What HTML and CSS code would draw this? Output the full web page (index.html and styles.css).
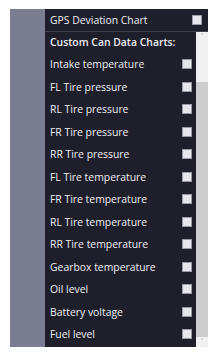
FILE: index.html
```html
<!DOCTYPE html>
<html>
  <head>
    <title>Chart Options</title>
    <link rel="stylesheet" href="styles.css">
  </head>
  <body>
    <div class="frame">
      <div class="side"></div>
      <div class="main">
        <div class="top-row">
          <span class="label">GPS Deviation Chart</span>
          <span class="check"></span>
        </div>
        <div class="list-wrap">
          <div class="list">
            <div class="heading">Custom Can Data Charts:</div>
            <div class="item"><span class="label">Intake temperature</span><span class="check"></span></div>
            <div class="item"><span class="label">FL Tire pressure</span><span class="check"></span></div>
            <div class="item"><span class="label">RL Tire pressure</span><span class="check"></span></div>
            <div class="item"><span class="label">FR Tire pressure</span><span class="check"></span></div>
            <div class="item"><span class="label">RR Tire pressure</span><span class="check"></span></div>
            <div class="item"><span class="label">FL Tire temperature</span><span class="check"></span></div>
            <div class="item"><span class="label">FR Tire temperature</span><span class="check"></span></div>
            <div class="item"><span class="label">RL Tire temperature</span><span class="check"></span></div>
            <div class="item"><span class="label">RR Tire temperature</span><span class="check"></span></div>
            <div class="item"><span class="label">Gearbox temperature</span><span class="check"></span></div>
            <div class="item"><span class="label">Oil level</span><span class="check"></span></div>
            <div class="item"><span class="label">Battery voltage</span><span class="check"></span></div>
            <div class="item"><span class="label">Fuel level</span><span class="check"></span></div>
          </div>
          <div class="scrollbar">
            <div class="arrow">&#x2C4;</div>
            <div class="track"></div>
            <div class="thumb"></div>
            <div class="arrow">&#x2C5;</div>
          </div>
        </div>
      </div>
    </div>
  </body>
</html>
```

FILE: styles.css
```css
:root {
  --panel-dark: #1f1f2c;
  --panel-side: #7b7d91;
  --text-light: #eeeef2;
  --check-fill: #e6e6ec;
  --check-border: #9a9aa8;
  --scroll-track: #f0f0f0;
  --scroll-thumb: #cdcdcd;
}

body {
  margin: 0;
  padding: 9px 12px 15px 10px;
  background-color: white;
  font-family: "Open Sans", "Noto Sans", sans-serif;
  font-size: 10.4px;
  color: var(--text-light);
}

.frame {
  display: flex;
  height: 338px;
}

.side {
  width: 35px;
  background-color: var(--panel-side);
}

.main {
  flex: 1;
  display: flex;
  flex-direction: column;
  background-color: var(--panel-dark);
  min-width: 0;
}

.top-row {
  display: flex;
  align-items: center;
  justify-content: space-between;
  height: 22px;
  padding: 0 6px 0 5px;
  border-bottom: 1px solid #40414f;
}

.list-wrap {
  flex: 1;
  display: flex;
  min-height: 0;
}

.list {
  flex: 1;
  overflow: hidden;
  padding-left: 5px;
}

.heading {
  font-weight: 600;
  height: 21px;
  line-height: 21px;
}

.item {
  display: flex;
  align-items: center;
  justify-content: space-between;
  height: 22.5px;
  padding-right: 4px;
}

.check {
  width: 8px;
  height: 8px;
  background-color: var(--check-fill);
  border: 1px solid var(--check-border);
}

.scrollbar {
  width: 12px;
  display: flex;
  flex-direction: column;
  background-color: var(--scroll-track);
}

.arrow {
  height: 10px;
  font-size: 8px;
  line-height: 10px;
  text-align: center;
  color: #a0a0a0;
}

.track {
  height: 40px;
}

.thumb {
  flex: 1;
  background-color: var(--scroll-thumb);
}
```
